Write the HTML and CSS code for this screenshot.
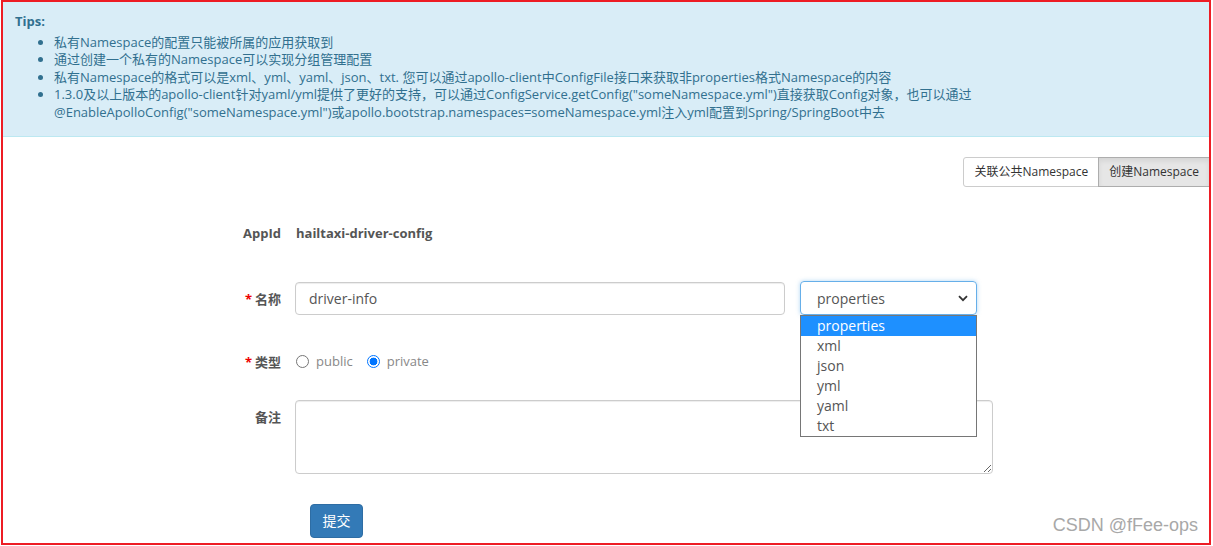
FILE: index.html
```html
<!DOCTYPE html>
<html>
<head>
<meta charset="utf-8">
<link rel="stylesheet" href="styles.css">
</head>
<body>
<div class="frame">
  <div class="alert">
    <div class="tips-title">Tips:</div>
    <ul class="tips-list">
      <li>私有Namespace的配置只能被所属的应用获取到</li>
      <li>通过创建一个私有的Namespace可以实现分组管理配置</li>
      <li>私有Namespace的格式可以是xml、yml、yaml、json、txt. 您可以通过apollo-client中ConfigFile接口来获取非properties格式Namespace的内容</li>
      <li>1.3.0及以上版本的apollo-client针对yaml/yml提供了更好的支持，可以通过ConfigService.getConfig("someNamespace.yml")直接获取Config对象，也可以通过@EnableApolloConfig("someNamespace.yml")或apollo.bootstrap.namespaces=someNamespace.yml注入yml配置到Spring/SpringBoot中去</li>
    </ul>
  </div>

  <div class="btn-row">
    <div class="btn-group">
      <div class="btn">关联公共Namespace</div>
      <div class="btn active">创建Namespace</div>
    </div>
  </div>

  <div class="form">
    <div class="row row-appid">
      <div class="label">AppId</div>
      <div class="appid-value">hailtaxi-driver-config</div>
    </div>

    <div class="row row-name">
      <div class="label"><span class="req">*</span>名称</div>
      <div class="input">driver-info</div>
      <div class="select-wrap">
        <div class="select">
          <span>properties</span>
          <svg class="chevron" width="10" height="7" viewBox="0 0 10 7"><path d="M1 1.2 L5 5.2 L9 1.2" fill="none" stroke="#333" stroke-width="1.8"/></svg>
        </div>
        <div class="dropdown">
          <div class="opt selected">properties</div>
          <div class="opt">xml</div>
          <div class="opt">json</div>
          <div class="opt">yml</div>
          <div class="opt">yaml</div>
          <div class="opt">txt</div>
        </div>
      </div>
    </div>

    <div class="row row-type">
      <div class="label"><span class="req">*</span>类型</div>
      <div class="radios">
        <span class="radio"></span><span class="radio-text">public</span>
        <span class="radio checked"></span><span class="radio-text">private</span>
      </div>
    </div>

    <div class="row row-comment">
      <div class="label label-top">备注</div>
      <textarea class="textarea"></textarea>
    </div>

    <div class="row row-submit">
      <div class="submit">提交</div>
    </div>
  </div>

  <div class="watermark">CSDN @fFee-ops</div>
</div>
</body>
</html>
```

FILE: styles.css
```css
* { box-sizing: border-box; }
html, body { margin: 0; padding: 0; background: #fff; }
body {
  font-family: "Open Sans", "Noto Sans CJK SC", sans-serif;
  font-size: 13px;
  color: #333;
}
.frame {
  position: relative;
  margin: 0 2px 1px 1px;
  height: 545px;
  border: 2px solid #ed1c24;
  overflow: hidden;
}
.alert {
  background: #d9edf7;
  border-bottom: 1px solid #bce8f1;
  color: #31708f;
  padding: 11px 12px 14px 12px;
  height: 135px;
  line-height: 17.5px;
}
.tips-title { font-weight: 700; }
.tips-list {
  margin: 3px 0 0 0;
  padding-left: 39px;
}
.tips-list li { padding-right: 212px; }
.btn-row {
  display: flex;
  justify-content: flex-end;
  margin-top: 20px;
  margin-right: -1px;
}
.btn-group { display: flex; }
.btn {
  height: 30px;
  line-height: 28px;
  padding: 0 10px;
  font-size: 12px;
  border: 1px solid #ccc;
  background: #fff;
  color: #333;
}
.btn:first-child { border-radius: 3px 0 0 3px; }
.btn + .btn { margin-left: -1px; }
.btn.active { background: #e6e6e6; border-color: #adadad; box-shadow: inset 0 3px 5px rgba(0,0,0,0.08); }
.form { display: flex; flex-direction: column; }
.row { display: flex; align-items: center; }
.label {
  width: 278px;
  text-align: right;
  font-weight: 700;
  color: #555;
  margin-right: 14px;
}
.req { color: #e00; margin-right: 3px; }
.row-appid { height: 34px; margin-top: 29px; }
.appid-value { font-weight: 700; color: #555; margin-left: 1px; }
.row-name { height: 34px; margin-top: 31px; }
.input {
  width: 490px;
  height: 33px;
  border: 1px solid #ccc;
  border-radius: 4px;
  padding: 0 13px;
  font-size: 14px;
  line-height: 31px;
  color: #555;
  box-shadow: inset 0 1px 1px rgba(0,0,0,0.075);
}
.select-wrap { position: relative; margin-left: 15px; z-index: 5; }
.select {
  width: 177px;
  height: 34px;
  border: 1px solid #66afe9;
  border-radius: 4px;
  padding: 0 8px 0 16px;
  font-size: 14px;
  color: #555;
  display: flex;
  align-items: center;
  justify-content: space-between;
  box-shadow: 0 0 4px rgba(102,175,233,0.5);
}
.dropdown {
  position: absolute;
  top: 34px;
  left: 0;
  width: 177px;
  background: #fff;
  border: 1px solid #767676;
  font-size: 14px;
  color: #555;
}
.opt { height: 20px; line-height: 20px; padding-left: 16px; }
.opt.selected { background: #1e90ff; color: #fff; }
.row-type { height: 34px; margin-top: 29px; }
.radios { display: flex; align-items: center; color: #888; }
.radio {
  width: 13px;
  height: 13px;
  border: 1px solid #767676;
  border-radius: 50%;
  margin: 0 7px 0 1px;
}
.radio.checked {
  border: 1px solid #0075ff;
  background: radial-gradient(circle, #0075ff 0 3.6px, #fff 4.2px);
}
.radio-text { margin-right: 13px; }
.row-comment { align-items: flex-start; margin-top: 22px; }
.label-top { padding-top: 7px; }
.textarea {
  width: 698px;
  height: 74px;
  border: 1px solid #ccc;
  border-radius: 4px;
  resize: vertical;
  margin: 0;
  box-shadow: inset 0 1px 1px rgba(0,0,0,0.075);
}
.row-submit { margin-top: 30px; padding-left: 307px; }
.submit {
  width: 53px;
  height: 34px;
  line-height: 32px;
  text-align: center;
  background: #337ab7;
  border: 1px solid #2e6da4;
  border-radius: 4px;
  color: #fff;
  font-size: 14px;
}
.watermark {
  position: absolute;
  right: 11px;
  bottom: 7px;
  font-family: "Liberation Sans", Arial, sans-serif;
  font-size: 18px;
  color: #a8a8a8;
}
```
